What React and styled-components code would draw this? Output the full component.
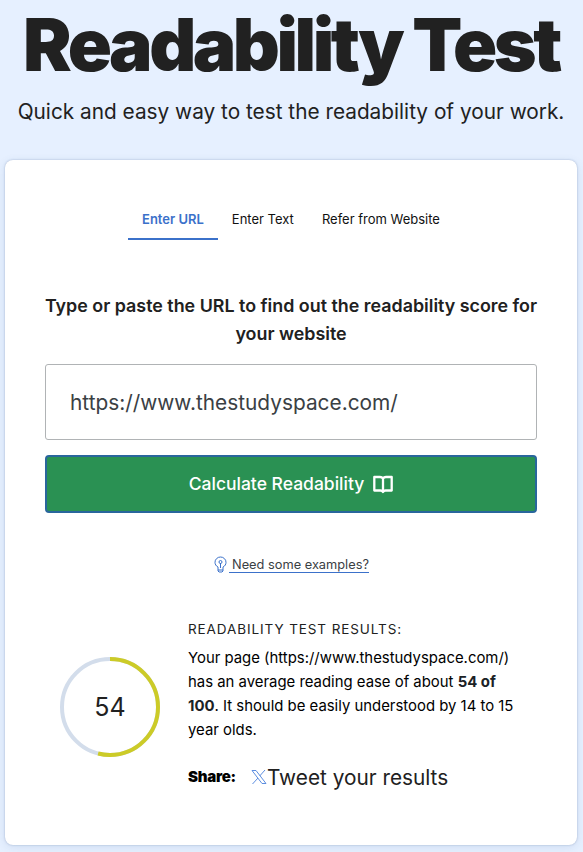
import React from 'react';
import styled, { createGlobalStyle } from 'styled-components';

const Global = createGlobalStyle`
  * { box-sizing: border-box; }
  html, body { margin: 0; background: #e6f0ff; overflow: hidden; }
  body { font-family: Inter, "Liberation Sans", sans-serif; color: #212121; font-optical-sizing: none; }
`;
const Page = styled.main`
  height: 852px;
  padding: 0 6px 0 5px;
  display: flex;
  flex-direction: column;
`;
const Title = styled.h1`
  margin: 0 -5px;
  padding-top: 5px;
  height: 95px;
  font-size: 73px;
  line-height: 80px;
  font-weight: 900;
  letter-spacing: -3.5px;
  text-align: center;
  white-space: nowrap;
`;
const Lead = styled.p`
  margin: 0;
  height: 65px;
  padding-top: 2px;
  font-size: 20.8px;
  line-height: 30px;
  text-align: center;
  white-space: nowrap;
`;
const Card = styled.section`
  height: 685px;
  background: #fff;
  border-radius: 8px;
  padding: 39px 40px 0;
  box-shadow: 0 0 2px rgba(40, 70, 120, 0.35), 0 2px 10px rgba(40, 80, 140, 0.12);
`;
const Tabs = styled.nav`
  display: flex;
  justify-content: center;
  height: 41px;
`;
const Tab = styled.button`
  border: 0;
  border-bottom: 2px solid ${(p) => (p.$active ? '#3b71ca' : 'transparent')};
  background: none;
  padding: 0 14px;
  font: ${(p) => (p.$active ? 600 : 400)} 13px/36px Inter, sans-serif;
  color: ${(p) => (p.$active ? '#3b71ca' : '#111')};
  white-space: nowrap;
`;
const Prompt = styled.h2`
  margin: 52px -5px 0;
  font-size: 17.87px;
  line-height: 28px;
  font-weight: 600;
  text-align: center;
`;
const UrlField = styled.input`
  display: block;
  width: 100%;
  height: 76px;
  margin-top: 16px;
  padding: 0 24px;
  border: 1px solid #b0b3b5;
  border-radius: 3px;
  background: #fff;
  font: 400 20.85px Inter, sans-serif;
  color: #3a4044;
`;
const Submit = styled.button`
  display: flex;
  align-items: center;
  justify-content: center;
  gap: 9px;
  width: 100%;
  height: 58px;
  margin-top: 15px;
  border: 2px solid #29669c;
  border-radius: 4px;
  background: #2a9153;
  color: #fff;
  font: 500 17.5px Inter, sans-serif;
  padding-bottom: 3px;
  & svg { margin-top: 2px; }
`;
const Examples = styled.div`
  display: flex;
  justify-content: center;
  gap: 2px;
  margin-top: 43px;
  padding-left: 1px;
  height: 18px;
`;
const ExampleLink = styled.a`
  font-size: 12.8px;
  line-height: 17px;
  height: 17px;
  padding: 0 0 0 3px;
  border-bottom: 1px solid #3b71ca;
  color: #3a4044;
`;
const Results = styled.div`
  display: grid;
  grid-template-columns: 128px 1fr;
  margin: 45px 0 0 15px;
`;
const Gauge = styled.div`
  display: grid;
  width: 100px;
  height: 100px;
  margin-top: 38px;
  place-items: center;
  & > * { grid-area: 1 / 1; }
`;
const Score = styled.span`
  font-size: 25px;
`;
const Label = styled.h3`
  margin: 0;
  font-size: 13.5px;
  line-height: 20px;
  font-weight: 400;
  letter-spacing: 0.9px;
`;
const Summary = styled.p`
  margin: 7px 0 0;
  font-size: 14.9px;
  line-height: 24px;
  color: #000;
  white-space: nowrap;
  & b { color: #1b2226; }
`;
const Share = styled.div`
  display: flex;
  align-items: center;
  margin-top: 20px;
  height: 30px;
`;
const ShareLabel = styled.strong`
  width: 63px;
  margin-top: -2px;
  font-size: 15px;
  font-weight: 900;
  letter-spacing: -0.25px;
  color: #000;
`;
const Tweet = styled.a`
  font-size: 20.8px;
`;

const BookIcon = () => (
  <svg width="20" height="19" viewBox="0 0 20 19" fill="none" stroke="currentColor" strokeWidth="2.300" strokeLinejoin="round">
    <path d="M10 3.500Q9 2 7 2H1.300V15.500H7.500Q9.300 15.500 10 17Q10.700 15.500 12.500 15.500H18.700V2H13Q11 2 10 3.500V17" />
  </svg>
);
const BulbIcon = () => (
  <svg width="13" height="18" viewBox="0 0 13 18" fill="none" stroke="#3b71ca" strokeWidth="1">
    <path d="M4 12V11C2 10 1 8.300 1 6.300A5.500 5.300 0 0 1 12 6.300C12 8.300 11 10 9 11V12M4 12V15L5 16H8L9 15V12M4 14H9M6.500 12V7" />
    <circle cx="6.500" cy="6" r="1.500" />
  </svg>
);
const XIcon = () => (
  <svg width="16" height="16" viewBox="0 0 16 16" fill="none" stroke="#5d8ee0" strokeWidth="1">
    <path d="M1 1.500H5L15 14.500H11ZM14 1L8.700 7M7 9L1.500 15" />
  </svg>
);

export default function App() {
  return (
    <>
      <Global />
      <Page>
        <Title>Readability Test</Title>
        <Lead>Quick and easy way to test the readability of your work.</Lead>
        <Card>
          <Tabs>
            <Tab $active>Enter URL</Tab>
            <Tab>Enter Text</Tab>
            <Tab>Refer from Website</Tab>
          </Tabs>
          <Prompt>Type or paste the URL to find out the readability score for<br />your website</Prompt>
          <UrlField defaultValue="https://www.thestudyspace.com/" />
          <Submit>Calculate Readability <BookIcon /></Submit>
          <Examples><BulbIcon /><ExampleLink>Need some examples?</ExampleLink></Examples>
          <Results>
            <Gauge>
              <svg width="100" height="100" viewBox="0 0 100 100" fill="none" strokeWidth="4">
                <circle cx="50" cy="50" r="48" stroke="#d3ddeb" />
                <circle cx="50" cy="50" r="48" stroke="#cccb27" pathLength="100" strokeDasharray="54 46" transform="rotate(-90 50 50)" />
              </svg>
              <Score>54</Score>
            </Gauge>
            <div>
              <Label>READABILITY TEST RESULTS:</Label>
              <Summary>
                Your page (https://www.thestudyspace.com/)<br />
                has an average reading ease of about <b>54 of<br />100</b>. It should be easily understood by 14 to 15<br />year olds.
              </Summary>
              <Share><ShareLabel>Share:</ShareLabel><XIcon /><Tweet>Tweet your results</Tweet></Share>
            </div>
          </Results>
        </Card>
      </Page>
    </>
  );
}
